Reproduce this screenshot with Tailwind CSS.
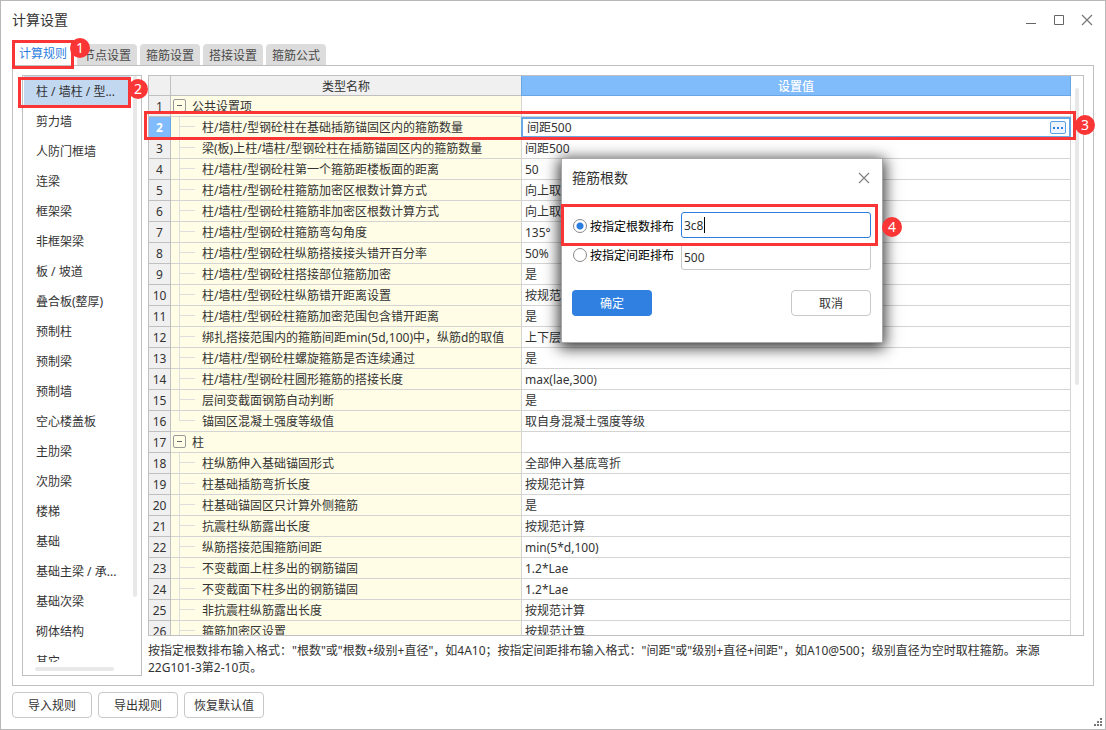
<!DOCTYPE html>
<html lang="zh-CN">
<head>
<meta charset="utf-8">
<meta name="viewport" content="width=device-width, initial-scale=1">
<title>计算设置</title>
<script src="https://cdn.jsdelivr.net/npm/@tailwindcss/browser@4"></script>
</head>
<body class="font-['Noto_Sans','Noto_Sans_CJK_SC',sans-serif] text-xs text-[#333]">
<div class="relative flex h-screen flex-col overflow-hidden border border-[#b8b8b8] bg-white px-[11px] pb-[11px]">

  <header class="flex h-[38px] shrink-0 items-center justify-between pr-px">
    <h1 class="text-sm leading-5">计算设置</h1>
    <div class="flex gap-4">
      <button type="button" aria-label="最小化" class="size-3"><svg class="size-3" viewBox="0 0 12 12" fill="none" stroke="#666"><path d="M1 9.500h10"/></svg></button>
      <button type="button" aria-label="最大化" class="size-3"><svg class="size-3" viewBox="0 0 12 12" fill="none" stroke="#666"><path d="M1.500 1.500h9v9h-9z"/></svg></button>
      <button type="button" aria-label="关闭" class="size-3"><svg class="size-3" viewBox="0 0 12 12" fill="none" stroke="#777" stroke-width="1.2"><path d="M1 1l10 10M11 1L1 11"/></svg></button>
    </div>
  </header>

  <nav class="flex h-[26px] shrink-0 items-end gap-[3px] text-[#4a4a4a]">
    <button type="button" class="h-6 w-[62px] pt-[2px] text-[#2b7de0]">计算规则</button>
    <button type="button" class="h-[21px] w-[60px] rounded-t-sm bg-[#dcdcdc] pt-[2px]">节点设置</button>
    <button type="button" class="h-[21px] w-[60px] rounded-t-sm bg-[#dcdcdc] pt-[2px]">箍筋设置</button>
    <button type="button" class="h-[21px] w-[60px] rounded-t-sm bg-[#dcdcdc] pt-[2px]">搭接设置</button>
    <button type="button" class="h-[21px] w-[60px] rounded-t-sm bg-[#dcdcdc] pt-[2px]">箍筋公式</button>
  </nav>

  <main class="flex min-h-0 flex-1 gap-[6px] border border-[#c0c0c0] p-[9px]">
    <aside class="flex w-[120px] shrink-0 flex-col border border-[#c0c0c0]">
      <div class="flex min-h-0 flex-1 pr-1">
        <ul id="categories" class="min-w-0 flex-1 overflow-hidden pl-px"></ul>
        <div class="h-[521px] w-1 shrink-0 rounded-full bg-[#e8e8e8]"></div>
      </div>
      <div class="mt-[5px] mb-1 ml-3 h-1 w-[79px] shrink-0 rounded-full bg-[#e8e8e8]"></div>
    </aside>

    <section class="flex min-w-0 flex-1 flex-col">
      <div class="flex min-h-0 flex-1 overflow-hidden border border-[#c0c0c0]">
        <div class="min-w-0 flex-1 overflow-hidden">
          <table class="w-full table-fixed border-separate border-spacing-0 text-left">
            <colgroup><col class="w-[22px]"><col class="w-[350px]"><col></colgroup>
            <thead>
              <tr class="h-5 text-center leading-[17px]">
                <th class="border-r border-b border-[#c0c0c0] bg-[#f0f0f0] p-0"></th>
                <th class="border-b border-[#c0c0c0] bg-[#f0f0f0] p-0 pt-[2px] font-normal">类型名称</th>
                <th class="border border-t-0 border-[#67a7e8] bg-[#80bbfb] p-0 pt-[2px] font-medium text-white">设置值</th>
              </tr>
            </thead>
            <tbody id="rules"></tbody>
          </table>
        </div>
        <div class="w-3 shrink-0 px-1 pt-3"><div class="h-[297px] w-1 rounded-full bg-[#e8e8e8]"></div></div>
      </div>
      <p class="h-10 shrink-0 pt-[6px] leading-[17px]">按指定根数排布输入格式："根数"或"根数+级别+直径"，如4A10；按指定间距排布输入格式："间距"或"级别+直径+间距"，如A10@500；级别直径为空时取柱箍筋。来源22G101-3第2-10页。</p>
    </section>
  </main>

  <footer class="mt-[6px] flex shrink-0 gap-[6px]">
    <button type="button" class="h-[26px] w-20 rounded border border-[#c8c8c8] pt-[2px]">导入规则</button>
    <button type="button" class="h-[26px] w-20 rounded border border-[#c8c8c8] pt-[2px]">导出规则</button>
    <button type="button" class="h-[26px] w-20 rounded border border-[#c8c8c8] pt-[2px]">恢复默认值</button>
  </footer>
  <svg class="absolute right-[3px] bottom-[3px] size-2" viewBox="0 0 8 8" fill="#777" shape-rendering="crispEdges"><path d="M6 0h2v2h-2zM3 3h2v2h-2zM6 3h2v2h-2zM0 6h2v2h-2zM3 6h2v2h-2zM6 6h2v2h-2z"/></svg>

  <!-- 箍筋根数 -->
  <div role="dialog" aria-labelledby="dlg-title" class="absolute top-[157px] left-[560px] w-[322px] border border-[#a8a8a8] bg-white pt-[9px] pr-[11px] pb-[26px] pl-[10px] shadow-[0_3px_14px_2px_rgba(0,0,0,0.8)]">
    <div class="flex h-5 items-center justify-between pr-px">
      <h2 id="dlg-title" class="text-sm leading-5">箍筋根数</h2>
      <button type="button" aria-label="关闭对话框" class="size-3"><svg class="size-3" viewBox="0 0 12 12" fill="none" stroke="#808080" stroke-width="1.2"><path d="M1 1l10 10M11 1L1 11"/></svg></button>
    </div>
    <div class="mt-6 flex h-[26px] items-center text-black">
      <input id="by-count" type="radio" name="mode" checked class="mt-[2px] mr-[3px] ml-px size-[14px] appearance-none rounded-full border border-[#888] bg-white checked:bg-[radial-gradient(circle,#2b7de0_3px,transparent_4px)]">
      <label for="by-count" class="w-[91px] pt-[3px]">按指定根数排布</label>
      <div class="flex h-[26px] min-w-0 flex-1 items-center rounded-[3px] border border-[#2b7de0] px-[2px] text-[#333]">
        <input type="text" value="3c8" aria-label="根数" class="w-5 pt-[2px] outline-none">
        <span class="h-4 w-px bg-black"></span>
      </div>
    </div>
    <div class="mt-[6px] flex h-[26px] items-center text-black">
      <input id="by-space" type="radio" name="mode" class="mr-[3px] mb-1 ml-px size-[14px] appearance-none rounded-full border border-[#888] bg-white">
      <label for="by-space" class="mb-[2px] w-[91px]">按指定间距排布</label>
      <input type="text" value="500" aria-label="间距" class="h-[26px] min-w-0 flex-1 rounded-[3px] border border-[#c8c8c8] px-[2px] text-[#333] outline-none">
    </div>
    <div class="mt-5 flex justify-between">
      <button type="button" class="h-[26px] w-20 rounded bg-[#2f80e0] pt-[2px] text-white">确定</button>
      <button type="button" class="h-[26px] w-20 rounded border border-[#c8c8c8] pt-[2px]">取消</button>
    </div>
  </div>

  <!-- 步骤标注 -->
  <div class="pointer-events-none absolute top-[39px] left-[11px] h-[29px] w-[62px] border-3 border-[#fa3535]"></div>
  <div class="pointer-events-none absolute top-[76px] left-[17px] h-[31px] w-[113px] border-3 border-[#fa3535]"></div>
  <div class="pointer-events-none absolute top-[110px] left-[143px] h-[29px] w-[932px] border-3 border-[#fa3535]"></div>
  <div class="pointer-events-none absolute top-[203px] left-[560px] h-[42px] w-[317px] border-3 border-[#fa3535]"></div>
  <span class="absolute top-[37px] left-[69px] flex size-5 items-center justify-center rounded-full bg-[#fa3535] text-sm leading-5 text-white">1</span>
  <span class="absolute top-[78px] left-[127px] flex size-5 items-center justify-center rounded-full bg-[#fa3535] text-sm leading-5 text-white">2</span>
  <span class="absolute top-[114px] left-[1074px] flex size-5 items-center justify-center rounded-full bg-[#fa3535] text-sm leading-5 text-white">3</span>
  <span class="absolute top-[216px] left-[881px] flex size-5 items-center justify-center rounded-full bg-[#fa3535] text-sm leading-5 text-white">4</span>
</div>

<script>
const categories = ['柱 / 墙柱 / 型...', '剪力墙', '人防门框墙', '连梁', '框架梁', '非框架梁', '板 / 坡道', '叠合板(整厚)', '预制柱', '预制梁', '预制墙', '空心楼盖板', '主肋梁', '次肋梁', '楼梯', '基础', '基础主梁 / 承...', '基础次梁', '砌体结构', '其它'];
document.getElementById('categories').innerHTML = categories.map((name, i) =>
  `<li><button type="button" class="${i === 0
    ? 'block h-[30px] w-[106px] bg-[#c2d8f1] pt-[2px] pl-3 text-left whitespace-nowrap'
    : 'block h-[30px] w-[106px] pt-[2px] pl-3 text-left whitespace-nowrap'}">${name}</button></li>`).join('');

// [名称, 设置值, 是否分组]
const rules = [
  ['公共设置项', '', true],
  ['柱/墙柱/型钢砼柱在基础插筋锚固区内的箍筋数量', '间距500'],
  ['梁(板)上柱/墙柱/型钢砼柱在插筋锚固区内的箍筋数量', '间距500'],
  ['柱/墙柱/型钢砼柱第一个箍筋距楼板面的距离', '50'],
  ['柱/墙柱/型钢砼柱箍筋加密区根数计算方式', '向上取'],
  ['柱/墙柱/型钢砼柱箍筋非加密区根数计算方式', '向上取'],
  ['柱/墙柱/型钢砼柱箍筋弯勾角度', '135°'],
  ['柱/墙柱/型钢砼柱纵筋搭接接头错开百分率', '50%'],
  ['柱/墙柱/型钢砼柱搭接部位箍筋加密', '是'],
  ['柱/墙柱/型钢砼柱纵筋错开距离设置', '按规范'],
  ['柱/墙柱/型钢砼柱箍筋加密范围包含错开距离', '是'],
  ['绑扎搭接范围内的箍筋间距min(5d,100)中，纵筋d的取值', '上下层'],
  ['柱/墙柱/型钢砼柱螺旋箍筋是否连续通过', '是'],
  ['柱/墙柱/型钢砼柱圆形箍筋的搭接长度', 'max(lae,300)'],
  ['层间变截面钢筋自动判断', '是'],
  ['锚固区混凝土强度等级值', '取自身混凝土强度等级'],
  ['柱', '', true],
  ['柱纵筋伸入基础锚固形式', '全部伸入基底弯折'],
  ['柱基础插筋弯折长度', '按规范计算'],
  ['柱基础锚固区只计算外侧箍筋', '是'],
  ['抗震柱纵筋露出长度', '按规范计算'],
  ['纵筋搭接范围箍筋间距', 'min(5*d,100)'],
  ['不变截面上柱多出的钢筋锚固', '1.2*Lae'],
  ['不变截面下柱多出的钢筋锚固', '1.2*Lae'],
  ['非抗震柱纵筋露出长度', '按规范计算'],
  ['箍筋加密区设置', '按规范计算']
];
const branch = '<span class="mr-[7px] ml-2 flex h-5 w-4 shrink-0 flex-col"><span class="h-[10px] border-b border-l border-[#dedede]"></span><span class="flex-1 border-l border-[#dedede]"></span></span>';
const lastBranch = '<span class="mr-[7px] ml-2 flex h-5 w-4 shrink-0 flex-col"><span class="h-[10px] border-b border-l border-[#dedede]"></span></span>';
const toggle = '<button type="button" aria-label="折叠" class="mr-[6px] mb-px ml-[2px] flex size-[13px] shrink-0 items-center justify-center rounded-[2px] border border-[#999] bg-[#fffde6]"><span class="h-px w-[5px] bg-[#666]"></span></button>';
const editor = '<div class="flex h-5 items-center border-2 border-b border-[#67a7e8] bg-white pr-[3px] pl-1"><input type="text" value="间距500" aria-label="设置值" class="h-4 min-w-0 flex-1 outline-none"><button type="button" aria-label="更多" class="flex h-[13px] w-4 items-center justify-center gap-[2px] rounded-[2px] border border-[#5a9fe6] bg-[#eef4fc]"><span class="size-[2px] bg-[#2b7de0]"></span><span class="size-[2px] bg-[#2b7de0]"></span><span class="size-[2px] bg-[#2b7de0]"></span></button></div>';
document.getElementById('rules').innerHTML = rules.map(([name, value, group], i) => {
  const active = i === 1;
  const last = rules[i + 1] && rules[i + 1][2];
  return `<tr class="h-[21px] leading-[18px] whitespace-nowrap">
    <th scope="row" class="${active
      ? 'border-r border-b border-[#67a7e8] bg-[#80bbfb] p-0 pt-[2px] text-center font-bold text-white'
      : 'border-r border-b border-[#c0c0c0] bg-[#f0f0f0] p-0 pt-[2px] text-center font-normal'}">${i + 1}</th>
    <td class="border-b border-[#d4d4d4] bg-[#fffde6] p-0"><div class="flex h-5 items-center overflow-hidden">${group ? toggle : last ? lastBranch : branch}<span class="pt-[2px]">${name}</span></div></td>
    ${active ? `<td class="border-b border-[#d4d4d4] p-0">${editor}</td>`
      : `<td class="border-x border-b border-[#d4d4d4] p-0 pt-[2px] pl-[3px]">${value}</td>`}
  </tr>`;
}).join('');
</script>
</body>
</html>
